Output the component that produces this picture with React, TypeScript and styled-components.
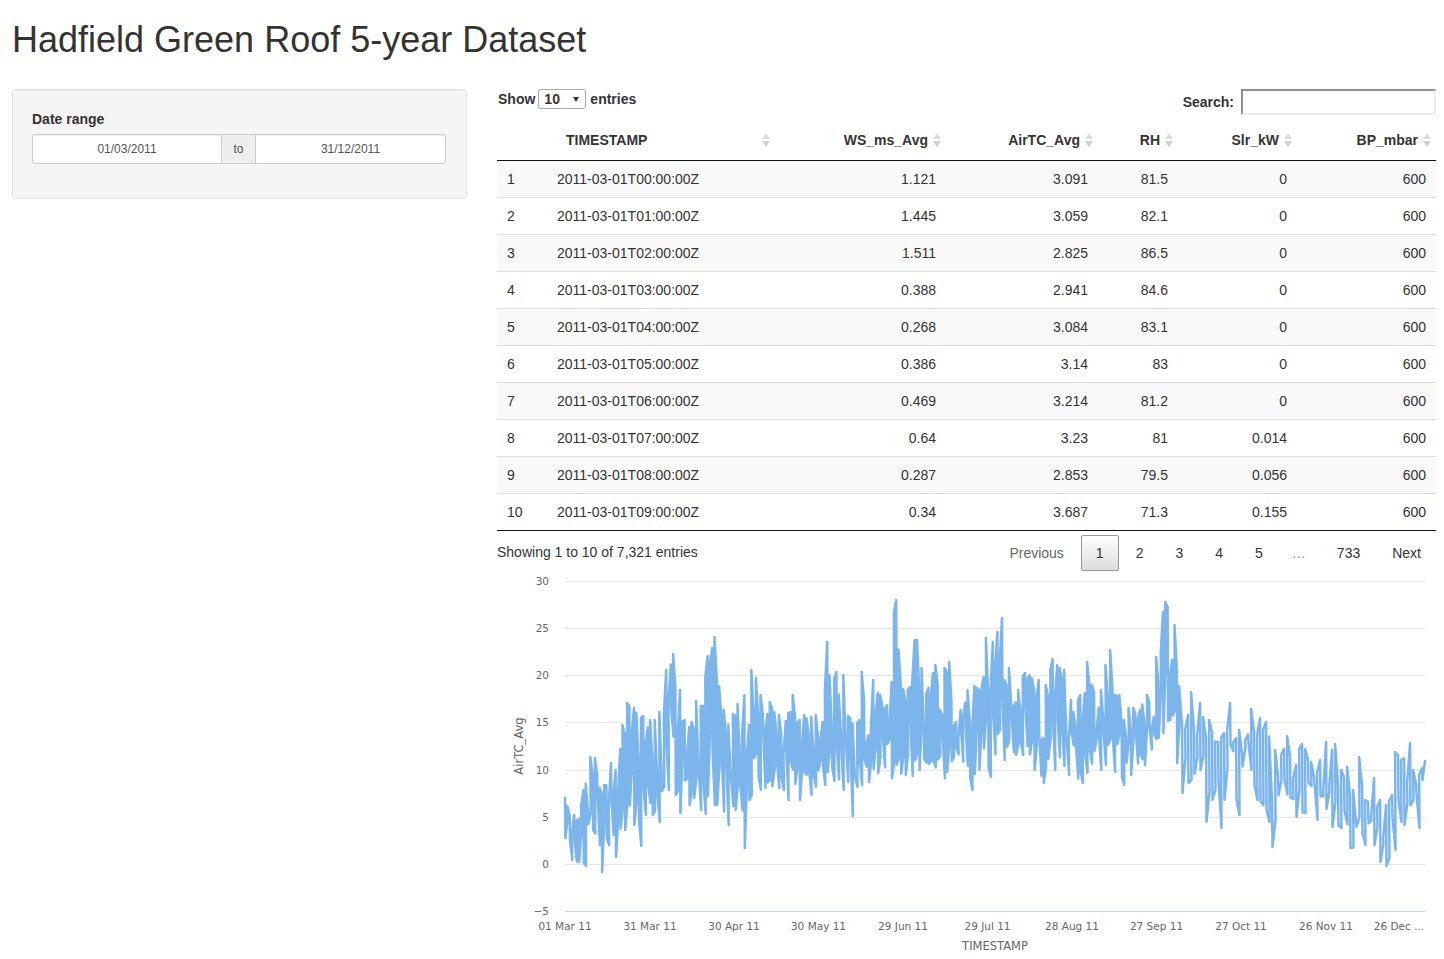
import { useMemo } from "react";
import styled, { createGlobalStyle } from "styled-components";

const GlobalStyle = createGlobalStyle`
  html, body {
    margin: 0;
    padding: 0;
    background: #fff;
    color: #333;
    font-family: "Liberation Sans", Arial, sans-serif;
    font-size: 14px;
    line-height: 20px;
  }
  * {
    box-sizing: border-box;
  }
`;

const Page = styled.div`
  width: 1444px;
  height: 959px;
  padding: 0 8px 0 12px;
  overflow: hidden;
`;

const Title = styled.h1`
  margin: 20px 0 29px;
  height: 40px;
  font-size: 36px;
  line-height: 40px;
  font-weight: 400;
  color: #333;
`;

const Layout = styled.div`
  display: grid;
  grid-template-columns: 455px 939px;
  column-gap: 30px;
  align-items: start;
`;

const Well = styled.div`
  height: 110px;
  padding: 19px;
  background: #f5f5f5;
  border: 1px solid #e3e3e3;
  border-radius: 4px;
  box-shadow: inset 0 1px 1px rgba(0, 0, 0, 0.05);
`;

const FieldLabel = styled.div`
  margin-bottom: 5px;
  font-weight: 700;
`;

const DateGroup = styled.div`
  display: flex;
  width: 414px;
  height: 30px;
`;

const DateInput = styled.input<{ $side: "left" | "right" }>`
  flex: ${(p) => (p.$side === "left" ? "0 0 190px" : "1")};
  min-width: 0;
  height: 30px;
  padding: 5px 10px;
  border: 1px solid #ccc;
  border-radius: ${(p) => (p.$side === "left" ? "3px 0 0 3px" : "0 3px 3px 0")};
  background: #fff;
  color: #555;
  font: 12px/18px "Liberation Sans", Arial, sans-serif;
  text-align: center;
  box-shadow: inset 0 1px 1px rgba(0, 0, 0, 0.075);
`;

const DateAddon = styled.span`
  flex: none;
  width: 35px;
  margin: 0 -1px;
  position: relative;
  z-index: 1;
  border: 1px solid #ccc;
  background: #eee;
  color: #555;
  font-size: 12px;
  line-height: 28px;
  text-align: center;
`;

const TableColumn = styled.div`
  display: flex;
  flex-direction: column;
`;

const Toolbar = styled.div`
  display: flex;
  justify-content: space-between;
  align-items: flex-start;
  height: 31px;
  font-weight: 700;
`;

const LengthLabel = styled.label`
  display: flex;
  align-items: center;
  gap: 4px;
  height: 20px;
  padding-left: 1px;
`;

const SelectWrap = styled.span`
  position: relative;
  display: block;
  width: 48px;
  height: 20px;
  margin-left: -1px;

  &::after {
    content: "";
    position: absolute;
    right: 7px;
    top: 8px;
    border-left: 3px solid transparent;
    border-right: 3px solid transparent;
    border-top: 5px solid #333;
  }
`;

const LengthSelect = styled.select`
  appearance: none;
  width: 100%;
  height: 20px;
  padding: 0 0 0 5px;
  border: 1px solid #a9a9a9;
  border-radius: 3px;
  background: #fff;
  color: #333;
  font: 700 14px/18px "Liberation Sans", Arial, sans-serif;
`;

const SearchLabel = styled.label`
  display: flex;
  align-items: center;
  gap: 7px;
  height: 26px;
`;

const SearchInput = styled.input`
  width: 195px;
  height: 26px;
  padding: 1px 2px;
  border-width: 2px;
  border-style: solid;
  border-color: #8f8f8f #ececec #ececec #8f8f8f;
  background: #fff;
`;

const Table = styled.table`
  width: 939px;
  table-layout: fixed;
  border-collapse: separate;
  border-spacing: 0;
`;

const HeadCell = styled.th`
  padding: 10px 0 10px 18px;
  border-bottom: 1px solid #111;
  font-weight: 700;
  text-align: right;
`;

const HeadInner = styled.div<{ $left?: boolean }>`
  display: flex;
  align-items: center;
  justify-content: flex-end;
  gap: 5px;
  padding-right: 5px;
  padding-left: ${(p) => (p.$left ? "1px" : "0")};

  & > span {
    margin-right: ${(p) => (p.$left ? "auto" : "0")};
  }
`;

const Row = styled.tr<{ $striped: boolean }>`
  background: ${(p) => (p.$striped ? "#f9f9f9" : "#fff")};
`;

const Cell = styled.td<{ $align: "left" | "right" }>`
  padding: 8px 10px;
  border-top: 1px solid #ddd;
  text-align: ${(p) => p.$align};
  white-space: nowrap;

  tr:first-child > & {
    border-top: 0;
  }
  tr:last-child > & {
    border-bottom: 1px solid #111;
  }
`;

const Footer = styled.div`
  display: flex;
  justify-content: space-between;
  align-items: flex-start;
  height: 40px;
  padding-top: 4px;
`;

const Info = styled.div`
  padding-top: 7px;
`;

const Pagination = styled.div`
  display: flex;
  gap: 2px;
`;

const PageButton = styled.span<{ $current?: boolean; $disabled?: boolean }>`
  padding: 7px 14px;
  border: 1px solid ${(p) => (p.$current ? "#979797" : "transparent")};
  border-radius: 2px;
  background: ${(p) => (p.$current ? "linear-gradient(to bottom, #fff 0%, #dcdcdc 100%)" : "transparent")};
  color: ${(p) => (p.$disabled ? "#666" : "#333")};
`;

const Ellipsis = styled.span`
  padding: 8px 14px 8px 12px;
  color: #888;
`;

const ChartSvg = styled.svg`
  display: block;
  width: 939px;
  height: 388px;
`;

const AxisText = styled.text`
  fill: #666;
  font-family: "DejaVu Sans", Verdana, sans-serif;
  font-size: 10.5px;
`;

const AxisTitle = styled.text`
  fill: #666;
  font-family: "DejaVu Sans", Verdana, sans-serif;
  font-size: 11.5px;
`;

const SortIcon = () => (
  <svg width="8" height="14" viewBox="0 0 8 14" style={{ flex: "none" }}>
    <path d="M4 0 8 6H0Z" fill="#dcdcdc" />
    <path d="M4 14 8 8H0Z" fill="#d0d0d0" />
  </svg>
);

const columns = [
  { name: "", width: 50 },
  { name: "TIMESTAMP", width: 228, left: true },
  { name: "WS_ms_Avg", width: 171 },
  { name: "AirTC_Avg", width: 152 },
  { name: "RH", width: 80 },
  { name: "Slr_kW", width: 119 },
  { name: "BP_mbar", width: 139 },
];

const rows = [
  ["1", "2011-03-01T00:00:00Z", "1.121", "3.091", "81.5", "0", "600"],
  ["2", "2011-03-01T01:00:00Z", "1.445", "3.059", "82.1", "0", "600"],
  ["3", "2011-03-01T02:00:00Z", "1.511", "2.825", "86.5", "0", "600"],
  ["4", "2011-03-01T03:00:00Z", "0.388", "2.941", "84.6", "0", "600"],
  ["5", "2011-03-01T04:00:00Z", "0.268", "3.084", "83.1", "0", "600"],
  ["6", "2011-03-01T05:00:00Z", "0.386", "3.14", "83", "0", "600"],
  ["7", "2011-03-01T06:00:00Z", "0.469", "3.214", "81.2", "0", "600"],
  ["8", "2011-03-01T07:00:00Z", "0.64", "3.23", "81", "0.014", "600"],
  ["9", "2011-03-01T08:00:00Z", "0.287", "2.853", "79.5", "0.056", "600"],
  ["10", "2011-03-01T09:00:00Z", "0.34", "3.687", "71.3", "0.155", "600"],
];

const yTicks: [string, number][] = [
  ["30", 581],
  ["25", 628],
  ["20", 675],
  ["15", 722],
  ["10", 770],
  ["5", 817],
  ["0", 864],
  ["−5", 911],
];
const xTicks: [string, number][] = [
  ["01 Mar 11", 565],
  ["31 Mar 11", 650],
  ["30 Apr 11", 734],
  ["30 May 11", 818.5],
  ["29 Jun 11", 903],
  ["29 Jul 11", 987.5],
  ["28 Aug 11", 1072],
  ["27 Sep 11", 1156.5],
  ["27 Oct 11", 1241],
  ["26 Nov 11", 1326],
  ["26 Dec ...", 1399],
];

// envelope of the series read off the chart, in page pixels
const upper: number[][] = [
  [565, 798], [570, 815], [575, 815], [581, 806], [584, 790], [590, 757], [596, 758], [603, 785], [610, 763],
  [616, 770], [622, 725], [627, 703], [633, 708], [640, 718], [643, 716], [650, 720], [660, 712], [664, 715],
  [666, 670], [672, 654], [675, 688], [680, 690], [685, 720], [692, 722], [695, 701], [701, 706], [708, 656],
  [712, 648], [714, 637], [717, 680], [720, 686], [728, 725], [737, 704], [745, 695], [751, 670], [755, 678],
  [760, 695], [770, 702], [775, 712], [780, 715], [790, 712], [793, 695], [800, 720], [805, 715], [815, 715],
  [822, 722], [825, 690], [827, 642], [830, 675], [836, 672], [843, 675], [850, 718], [860, 720], [861, 672],
  [865, 700], [874, 680], [880, 695], [888, 705], [892, 682], [895, 613], [897, 600], [900, 685], [908, 690],
  [912, 680], [915, 640], [918, 640], [921, 668], [926, 695], [932, 673], [936, 665], [941, 710], [945, 668],
  [948, 662], [952, 700], [960, 710], [967, 690], [975, 686], [982, 690], [985, 638], [990, 690], [993, 642],
  [998, 632], [1002, 618], [1005, 680], [1010, 668], [1018, 690], [1024, 673], [1030, 675], [1038, 680],
  [1046, 685], [1050, 670], [1053, 659], [1060, 668], [1064, 670], [1072, 700], [1080, 695], [1086, 662],
  [1092, 685], [1100, 690], [1106, 665], [1109, 650], [1114, 695], [1120, 695], [1128, 708], [1134, 708],
  [1140, 710], [1146, 695], [1150, 702], [1155, 695], [1157, 657], [1162, 612], [1166, 602], [1168, 607],
  [1172, 660], [1174, 625], [1177, 670], [1179, 686], [1185, 730], [1191, 692], [1199, 703], [1204, 717],
  [1210, 720], [1218, 742], [1225, 733], [1230, 703], [1236, 738], [1240, 730], [1250, 709], [1256, 735],
  [1261, 718], [1267, 722], [1274, 750], [1280, 755], [1287, 736], [1296, 765], [1300, 749], [1303, 744],
  [1312, 762], [1320, 760], [1326, 742], [1334, 744], [1340, 770], [1346, 767], [1352, 790], [1358, 800],
  [1360, 757], [1366, 800], [1373, 778], [1380, 800], [1386, 805], [1391, 795], [1394, 770], [1396, 752],
  [1402, 760], [1409, 743], [1413, 770], [1418, 775], [1421, 768], [1425, 761],
];

const lower: number[][] = [
  [565, 838], [570, 840], [572, 860], [578, 862], [583, 863], [585, 866], [592, 830], [600, 845], [602, 872],
  [608, 845], [613, 835], [615, 857], [625, 830], [635, 825], [640, 846], [645, 815], [652, 815], [660, 822],
  [668, 790], [675, 795], [680, 813], [690, 805], [700, 810], [705, 814], [716, 805], [728, 825], [735, 810],
  [745, 848], [750, 800], [765, 788], [780, 788], [788, 800], [800, 800], [810, 795], [825, 785], [844, 790],
  [853, 816], [861, 785], [869, 782], [878, 773], [892, 778], [906, 775], [912, 776], [928, 764], [945, 778],
  [954, 757], [968, 766], [971, 790], [980, 770], [990, 777], [1005, 760], [1015, 755], [1022, 755], [1035, 770],
  [1044, 783], [1055, 770], [1068, 775], [1083, 783], [1100, 770], [1115, 772], [1123, 785], [1130, 775],
  [1145, 765], [1158, 738], [1164, 733], [1170, 720], [1175, 710], [1177, 763], [1182, 740], [1183, 793],
  [1190, 780], [1199, 770], [1207, 822], [1212, 800], [1220, 828], [1225, 800], [1236, 800], [1240, 815],
  [1250, 770], [1258, 800], [1267, 810], [1272, 847], [1280, 780], [1297, 817], [1317, 820], [1331, 827],
  [1342, 828], [1350, 848], [1365, 845], [1375, 845], [1379, 862], [1387, 866], [1394, 850], [1400, 822],
  [1403, 825], [1412, 800], [1419, 828], [1425, 770],
];

const interp = (points: number[][], x: number) => {
  for (let i = 1; i < points.length; i++) {
    if (x <= points[i][0]) {
      const [x0, y0] = points[i - 1];
      const [x1, y1] = points[i];
      return y0 + ((y1 - y0) * (x - x0)) / (x1 - x0);
    }
  }
  return points[points.length - 1][1];
};

// control point that falls inside this bar's slot, so the real peaks are always hit
const pinned = (points: number[][], x: number, step: number, lowest: boolean) => {
  const hits = points.filter((p) => p[0] >= x - step / 2 && p[0] < x + step / 2).map((p) => p[1]);
  if (!hits.length) return null;
  return lowest ? Math.min(...hits) : Math.max(...hits);
};

const buildSeries = () => {
  let seed = 7321;
  const random = () => {
    seed = (seed * 16807) % 2147483647;
    return seed / 2147483647;
  };
  const parts: string[] = [];
  let x = 565;
  let down = true;
  while (x < 1424) {
    const step = x > 1178 ? 3 : 2.3;
    const top = pinned(upper, x, step, true);
    const bottom = pinned(lower, x, step, false);
    const baseTop = interp(upper, x);
    const baseBottom = interp(lower, x);
    const span = baseBottom - baseTop;
    const hi = top ?? baseTop + Math.pow(random(), 1.4) * span * 0.62;
    const lo = bottom ?? baseBottom - Math.pow(random(), 1.4) * span * 0.62;
    const bar = [`${x.toFixed(1)},${hi.toFixed(1)}`, `${(x + 0.4).toFixed(1)},${Math.max(lo, hi + 4).toFixed(1)}`];
    parts.push(...(down ? bar : bar.reverse()));
    down = !down;
    x += step;
  }
  parts.push("1425,761");
  return "M" + parts.join("L");
};

const Chart = () => {
  const series = useMemo(buildSeries, []);

  return (
    <ChartSvg viewBox="497 571 939 388">
      {yTicks.map(([label, y]) => (
        <g key={label}>
          <line x1="565" x2="1425" y1={y + 0.5} y2={y + 0.5} stroke={label === "−5" ? "#ccd6eb" : "#e6e6e6"} />
          <AxisText x="549" y={y + 4} textAnchor="end">
            {label}
          </AxisText>
        </g>
      ))}
      <path d={series} fill="none" stroke="#7cb5ec" strokeWidth="2.5" strokeLinejoin="round" strokeLinecap="round" />
      {xTicks.map(([label, x]) => (
        <AxisText key={label} x={x} y="930" textAnchor="middle">
          {label}
        </AxisText>
      ))}
      <AxisTitle x="995" y="950" textAnchor="middle">
        TIMESTAMP
      </AxisTitle>
      <AxisTitle x="523" y="746" textAnchor="middle" transform="rotate(-90 523 746)">
        AirTC_Avg
      </AxisTitle>
    </ChartSvg>
  );
};

const App = () => {
  return (
    <Page>
      <GlobalStyle />
      <Title>Hadfield Green Roof 5-year Dataset</Title>
      <Layout>
        <Well>
          <FieldLabel>Date range</FieldLabel>
          <DateGroup>
            <DateInput $side="left" defaultValue="01/03/2011" />
            <DateAddon>to</DateAddon>
            <DateInput $side="right" defaultValue="31/12/2011" />
          </DateGroup>
        </Well>
        <TableColumn>
          <Toolbar>
            <LengthLabel>
              Show
              <SelectWrap>
                <LengthSelect defaultValue="10">
                  <option value="10">10</option>
                  <option value="25">25</option>
                  <option value="50">50</option>
                </LengthSelect>
              </SelectWrap>
              entries
            </LengthLabel>
            <SearchLabel>
              Search:
              <SearchInput />
            </SearchLabel>
          </Toolbar>
          <Table>
            <colgroup>
              {columns.map((col) => (
                <col key={col.name} style={{ width: col.width }} />
              ))}
            </colgroup>
            <thead>
              <tr>
                {columns.map((col) => (
                  <HeadCell key={col.name}>
                    {col.name ? (
                      <HeadInner $left={col.left}>
                        <span>{col.name}</span>
                        <SortIcon />
                      </HeadInner>
                    ) : (
                      "\u00a0"
                    )}
                  </HeadCell>
                ))}
              </tr>
            </thead>
            <tbody>
              {rows.map((row, i) => (
                <Row key={row[0]} $striped={i % 2 === 0}>
                  {row.map((value, j) => (
                    <Cell key={j} $align={j < 2 ? "left" : "right"}>
                      {value}
                    </Cell>
                  ))}
                </Row>
              ))}
            </tbody>
          </Table>
          <Footer>
            <Info>Showing 1 to 10 of 7,321 entries</Info>
            <Pagination>
              <PageButton $disabled>Previous</PageButton>
              <PageButton $current>1</PageButton>
              <PageButton>2</PageButton>
              <PageButton>3</PageButton>
              <PageButton>4</PageButton>
              <PageButton>5</PageButton>
              <Ellipsis>…</Ellipsis>
              <PageButton>733</PageButton>
              <PageButton>Next</PageButton>
            </Pagination>
          </Footer>
          <Chart />
        </TableColumn>
      </Layout>
    </Page>
  );
};

export default App;
